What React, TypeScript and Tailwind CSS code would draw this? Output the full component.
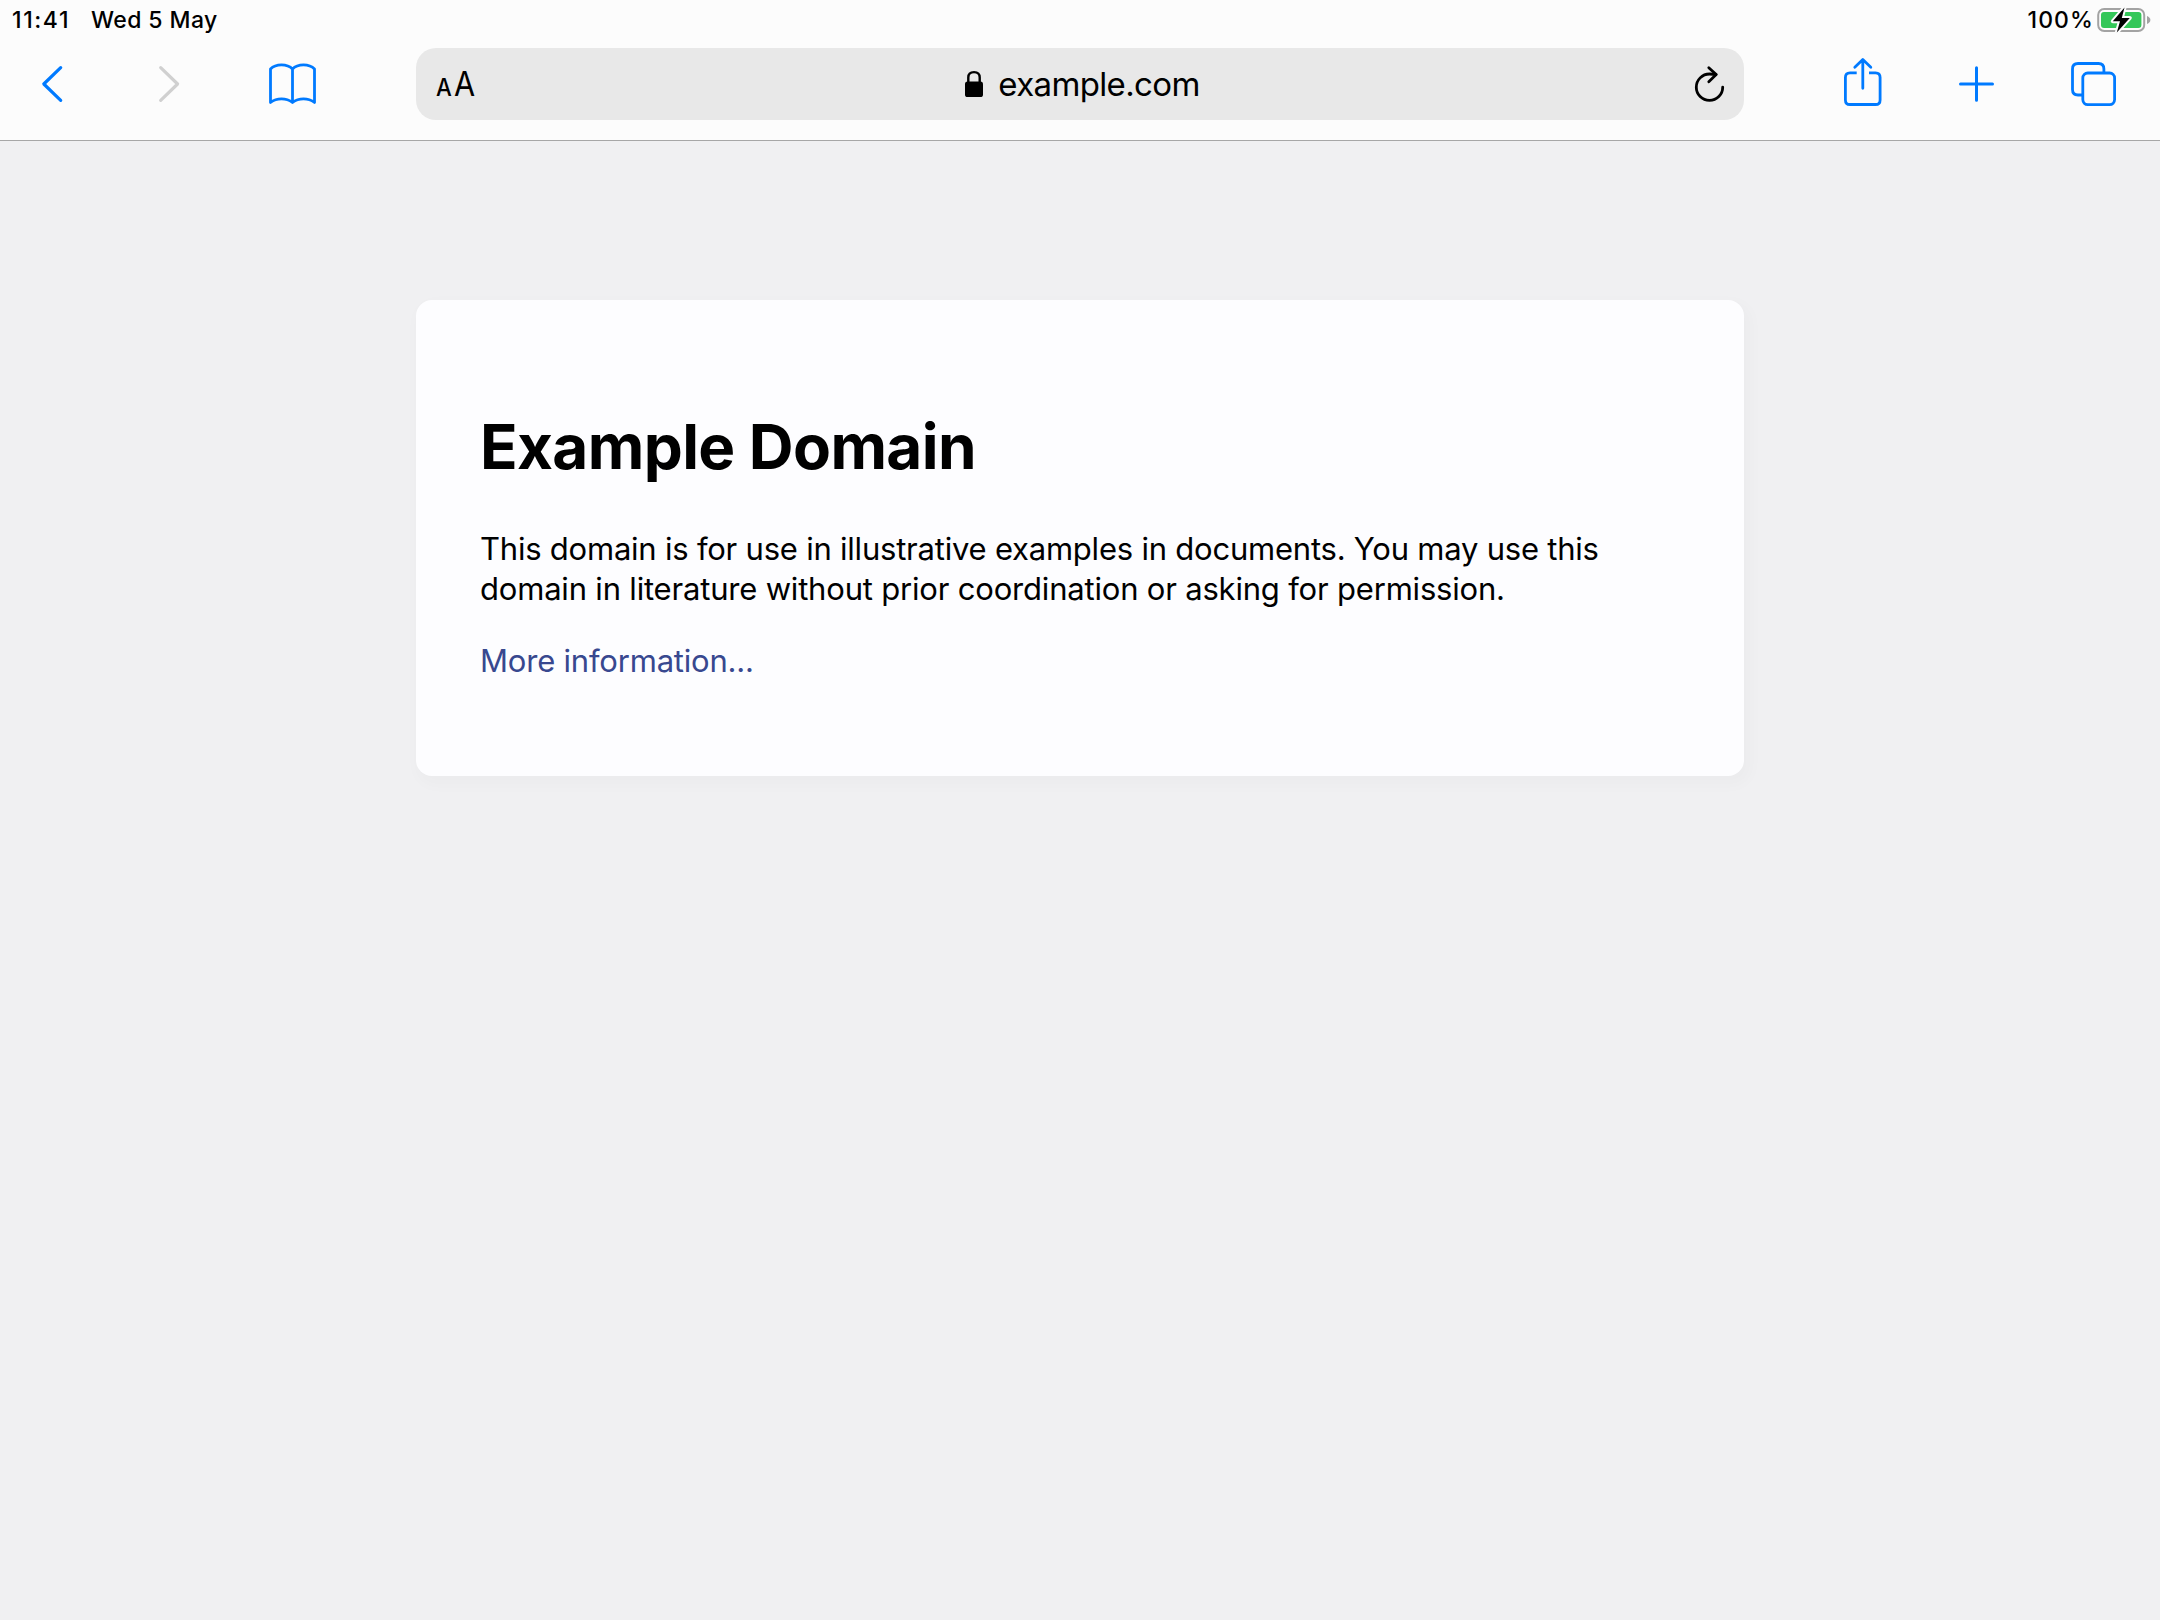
const blue = "#007aff";

function StatusBar() {
  return (
    <div className="flex h-10 items-center pl-3 pr-2 text-[23px] leading-10 font-medium">
      <span className="w-[79px] tracking-[1.6px]">11:41</span>
      <span className="tracking-[0.4px]">Wed 5 May</span>
      <span className="mr-0.5 ml-auto tracking-[1.1px]">100%</span>
      <Battery />
    </div>
  );
}

function Battery() {
  return (
    <svg width="56" height="32" viewBox="2096 4 56 32" fill="none">
      <rect x="2098.2" y="9" width="46" height="22" rx="6" stroke="#a3a3a3" strokeWidth="2" />
      <rect x="2101" y="12" width="40.4" height="16" rx="3" fill="#34c759" />
      <path d="M2147 16c2.2 1 3.4 2.300 3.400 4s-1.200 3-3.400 4z" fill="#a3a3a3" />
      <path
        d="M2124.500 7.500 2112.800 21.300h7.200l-3.200 11.200 13-14.500h-8z"
        fill="#000"
        stroke="#fcfcfc"
        strokeWidth="4"
        strokeLinejoin="round"
        paintOrder="stroke"
      />
    </svg>
  );
}

function Toolbar() {
  return (
    <nav className="flex h-[88px] items-center">
      <div className="flex w-[416px] items-center pl-9">
        <svg width="32" height="56" viewBox="36 56 32 56" fill="none" stroke={blue} strokeWidth="3.2" strokeLinecap="round" strokeLinejoin="round">
          <path d="M60.700 67.700 43.800 84l16.900 16.300" />
        </svg>
        <svg className="ml-[84px]" width="32" height="56" viewBox="152 56 32 56" fill="none" stroke="#d0d0d0" strokeWidth="3.2" strokeLinecap="round" strokeLinejoin="round">
          <path d="M160.700 67.700 177.600 84l-16.900 16.300" />
        </svg>
        <svg className="ml-20" width="56" height="56" viewBox="264 56 56 56" fill="none" stroke={blue} strokeWidth="2.8" strokeLinecap="round" strokeLinejoin="round">
          <path d="M292.500 69v33.500M292.500 69c-2.500-2.600-6.500-4.100-11-4.100s-8.500 1.500-11 4.100v33.500c3-2.300 6.800-3.600 11-3.600s8 1.300 11 3.600c3-2.300 6.800-3.600 11-3.600s8 1.300 11 3.600V69c-2.500-2.600-6.500-4.100-11-4.100s-8.500 1.500-11 4.100z" />
        </svg>
      </div>

      <AddressBar />

      <div className="flex w-[416px] items-center">
        <svg className="ml-[92px]" width="54" height="56" viewBox="1836 56 54 56" fill="none" stroke={blue} strokeWidth="2.8" strokeLinejoin="round">
          <path d="M1856.700 72.800h-6.700q-4.600 0-4.600 4.600v22.500q0 4.600 4.600 4.600h25.500q4.600 0 4.600-4.600V77.400q0-4.600-4.600-4.600H1869" />
          <path d="M1862.800 59.800v28.500M1854.800 67.300l8-7.700 8 7.700" strokeLinecap="round" />
        </svg>
        <svg className="ml-[62px]" width="48" height="56" viewBox="1952 56 48 56" fill="none" stroke={blue} strokeWidth="3" strokeLinecap="round">
          <path d="M1960.500 84h32M1976.500 67.800v32.500" />
        </svg>
        <svg className="ml-16" width="56" height="56" viewBox="2064 56 56 56" fill="none" stroke={blue} strokeWidth="2.8">
          <path d="M2103.900 72V69q0-5.500-5.500-5.500H2078q-5.500 0-5.500 5.500v20.500q0 5.500 5.500 5.500h4" />
          <rect x="2082.800" y="73" width="31.800" height="31.600" rx="5" />
        </svg>
      </div>
    </nav>
  );
}

function AddressBar() {
  return (
    <div className="grid h-[72px] flex-1 grid-cols-[1fr_auto_1fr] grid-rows-[72px] items-center rounded-[20px] bg-[#e8e8e8] pl-5 pr-[14px]">
      <div className="mt-1 flex items-baseline leading-[34px]">
        <span className="w-[18px] origin-left scale-x-[0.93] text-[24px] font-medium">A</span>
        <span className="origin-left scale-x-[0.9] text-[34px]">A</span>
      </div>
      <div className="flex items-center">
        <svg width="18" height="28" viewBox="965 70 18 28" fill="none">
          <rect x="965" y="81.600" width="18" height="15.400" rx="2.600" fill="#000" />
          <path d="M968.300 83v-5.500c0-3.400 2.200-5.400 5.700-5.400s5.700 2 5.700 5.400V83" stroke="#000" strokeWidth="2.400" />
        </svg>
        <span className="mr-px ml-[15px] text-[33px] leading-[72px] tracking-[-0.65px]">example.com</span>
      </div>
      <svg className="justify-self-end" width="40" height="40" viewBox="1690 64 40 40" fill="none" stroke="#000" strokeWidth="2.800" strokeLinecap="round" strokeLinejoin="round">
        <path d="M1722.700 87.200a13.200 13.200 0 1 1-13.200-13.200q3.500 0 6.500.6" />
        <path d="M1708.800 67.700 1716.200 74.600 1708.800 81.800" />
      </svg>
    </div>
  );
}

export default function App() {
  return (
    <div className="flex min-h-[1620px] w-full flex-col bg-[#f0f0f2] font-['Inter',sans-serif] text-black">
      <header className="h-[141px] border-b border-[#a7a7a7] bg-[#fcfcfc]">
        <StatusBar />
        <Toolbar />
      </header>
      <main className="mx-auto mt-[159px] h-[476px] w-[1328px] rounded-2xl bg-[#fdfdff] p-16 shadow-[4px_6px_14px_4px_rgba(0,0,0,0.02)]">
        <h1 className="mt-[45px] text-[62px] leading-[76px] font-bold tracking-[-0.6px]">Example Domain</h1>
        <p className="mt-[44px] text-[31px] leading-10">
          <span className="block tracking-[-0.22px]">
            This domain is for use in illustrative examples in documents. You may use this
          </span>
          <span className="block tracking-[-0.19px]">
            domain in literature without prior coordination or asking for permission.
          </span>
        </p>
        <p className="mt-8 text-[31px] leading-10 tracking-[-0.2px]">
          <a href="#" className="text-[#38488f]">
            More information...
          </a>
        </p>
      </main>
    </div>
  );
}
